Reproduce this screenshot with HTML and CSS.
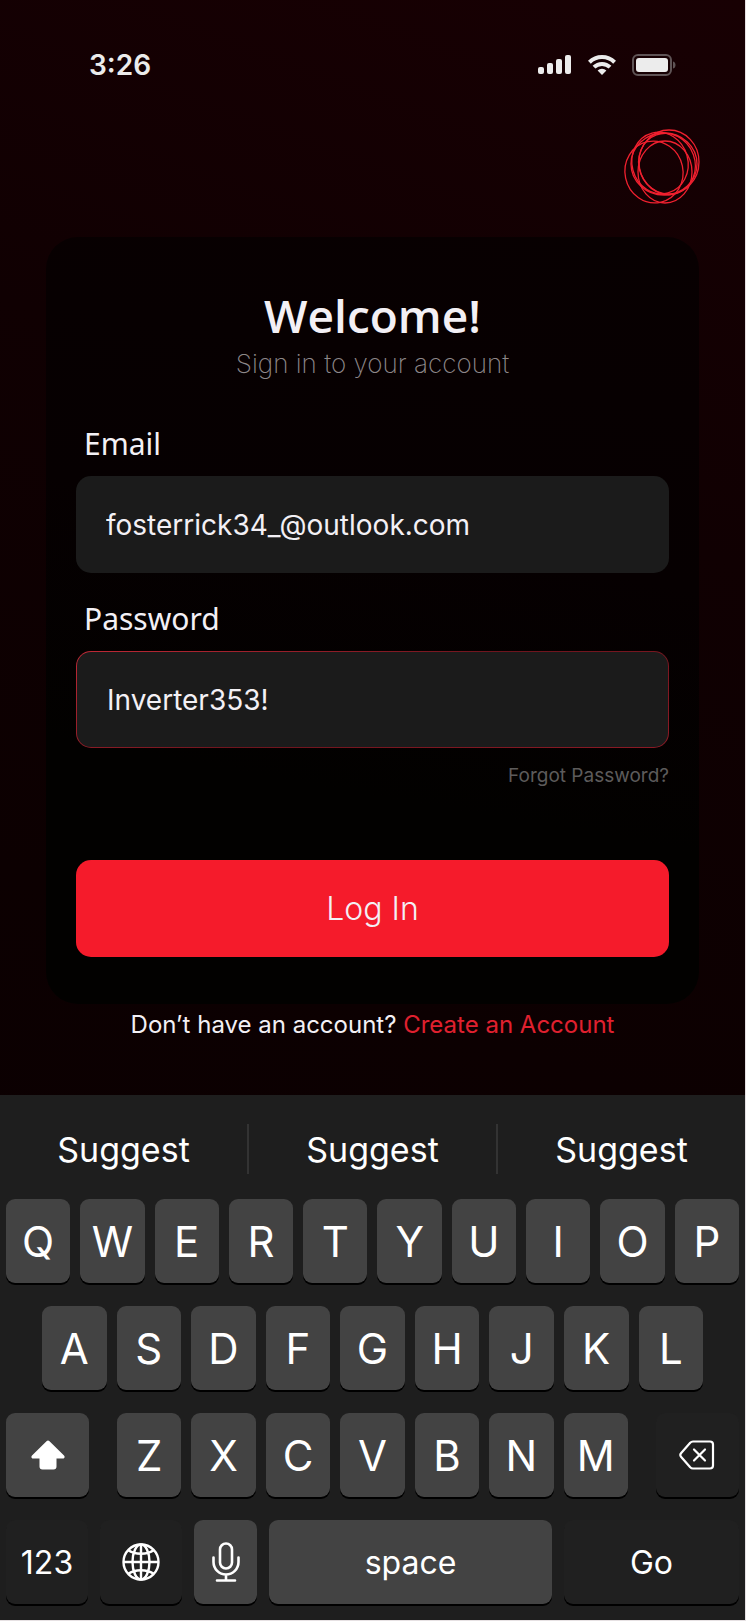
FILE: index.html
```
<!DOCTYPE html>
<html lang="en">
<head>
    <meta charset="UTF-8">
    <meta name="viewport" content="width=device-width, initial-scale=1.0">
    <title>Sign In</title>
    <link rel="stylesheet" href="styles.css">
</head>
<body>
    <div class="screen">
        <!-- Status bar -->
        <header class="status-bar">
            <span class="time">3:26</span>
            <div class="status-icons">
                <svg width="34" height="20" viewBox="0 0 34 20" fill="#ececec">
                    <rect x="0" y="12" width="6" height="7" rx="2"/>
                    <rect x="9" y="8" width="6" height="11" rx="2"/>
                    <rect x="18" y="4" width="6" height="15" rx="2"/>
                    <rect x="27" y="0" width="6" height="19" rx="2"/>
                </svg>
                <svg width="28" height="20" viewBox="0 0 28 20" fill="none" stroke="#ececec" stroke-width="4">
                    <path d="M1.4 7.2a18 18 0 0 1 25.2 0"/>
                    <path d="M6 12.2a11.4 11.4 0 0 1 16 0"/>
                    <path d="M14 20l-4.4-4.4a6.3 6.3 0 0 1 8.8 0z" fill="#ececec" stroke="none"/>
                </svg>
                <svg width="44" height="22" viewBox="0 0 44 22">
                    <rect x="1" y="1" width="38" height="20" rx="5" fill="none" stroke="#5f5456" stroke-width="2"/>
                    <rect x="4" y="4" width="32" height="14" rx="3" fill="#ececec"/>
                    <path d="M41 7.500c2 .5 2.500 2 2.500 3.500s-.5 3-2.500 3.500z" fill="#5f5456"/>
                </svg>
            </div>
        </header>

        <div class="brand">
            <svg class="logo" viewBox="0 0 84 84" fill="none" stroke="#f0202f" stroke-width="1.300">
                <ellipse cx="34" cy="47" rx="29" ry="31" transform="rotate(-12 34 47)"/>
                <ellipse cx="45" cy="47" rx="27" ry="31"/>
                <ellipse cx="40" cy="38" rx="28" ry="31" transform="rotate(-15 40 38)"/>
                <ellipse cx="49" cy="37" rx="30" ry="32"/>
                <ellipse cx="44" cy="39" rx="33" ry="31"/>
                <ellipse cx="47" cy="39" rx="28" ry="31" transform="rotate(-20 47 39)"/>
            </svg>
        </div>

        <!-- Login form -->
        <main class="login">
            <form class="card">
                <h1 class="card-title">Welcome!</h1>
                <p class="card-subtitle">Sign in to your account</p>

                <label class="field-label" for="email">Email</label>
                <input class="field" type="email" id="email" value="fosterrick34_@outlook.com">

                <label class="field-label" for="password">Password</label>
                <input class="field field-active" type="text" id="password" value="Inverter353!">

                <a class="forgot" href="#">Forgot Password?</a>
                <button class="login-btn" type="button">Log In</button>
            </form>
            <p class="signup">Don’t have an account? <a href="#">Create an Account</a></p>
        </main>

        <!-- Keyboard -->
        <section class="keyboard">
            <div class="suggestions">
                <button class="suggestion">Suggest</button>
                <button class="suggestion">Suggest</button>
                <button class="suggestion">Suggest</button>
            </div>
            <div class="key-row">
                <button class="key">Q</button>
                <button class="key">W</button>
                <button class="key">E</button>
                <button class="key">R</button>
                <button class="key">T</button>
                <button class="key">Y</button>
                <button class="key">U</button>
                <button class="key">I</button>
                <button class="key">O</button>
                <button class="key">P</button>
            </div>
            <div class="key-row key-row-inset">
                <button class="key">A</button>
                <button class="key">S</button>
                <button class="key">D</button>
                <button class="key">F</button>
                <button class="key">G</button>
                <button class="key">H</button>
                <button class="key">J</button>
                <button class="key">K</button>
                <button class="key">L</button>
            </div>
            <div class="key-row">
                <button class="key key-shift" aria-label="Shift">
                    <svg width="34" height="30" viewBox="0 0 34 30" fill="#fff">
                        <path d="M15.500 1.200a2.200 2.200 0 0 1 3 0l14.500 14.300c1.200 1.300.6 3-1.200 3H25.500v8a3 3 0 0 1-3 3h-11a3 3 0 0 1-3-3v-8H2.200c-1.800 0-2.400-1.700-1.200-3z"/>
                    </svg>
                </button>
                <button class="key">Z</button>
                <button class="key">X</button>
                <button class="key">C</button>
                <button class="key">V</button>
                <button class="key">B</button>
                <button class="key">N</button>
                <button class="key">M</button>
                <button class="key key-dark key-delete" aria-label="Delete">
                    <svg width="36" height="30" viewBox="0 0 36 30" fill="none" stroke="#fff" stroke-width="2.200" stroke-linecap="round" stroke-linejoin="round">
                        <path d="M14 1.500h17a3 3 0 0 1 3 3v21a3 3 0 0 1-3 3H14a4 4 0 0 1-2.800-1.200L2.200 17a3 3 0 0 1 0-4l9-10.300A4 4 0 0 1 14 1.500z"/>
                        <path d="M15 9.500l11 11M26 9.500l-11 11"/>
                    </svg>
                </button>
            </div>
            <div class="key-row key-row-bottom">
                <button class="key key-dark key-word key-side">123</button>
                <button class="key key-dark key-side" aria-label="Next keyboard">
                    <svg width="38" height="38" viewBox="0 0 38 38" fill="none" stroke="#fff" stroke-width="2.400">
                        <circle cx="19" cy="19" r="17.500"/>
                        <ellipse cx="19" cy="19" rx="8.500" ry="17.500"/>
                        <path d="M19 1v36M1 19h36"/>
                        <path d="M6 7c7 5 19 5 26 0M6 31c7-5 19-5 26 0"/>
                    </svg>
                </button>
                <button class="key key-mic" aria-label="Dictate">
                    <svg width="28" height="40" viewBox="0 0 28 40" fill="none" stroke="#fff" stroke-width="2.600" stroke-linecap="round">
                        <rect x="8" y="1.500" width="12" height="25" rx="6"/>
                        <path d="M1.500 15.500v4.500a12.500 12.500 0 0 0 25 0v-4.500M14 32.500V38.500M5 38.500h18"/>
                    </svg>
                </button>
                <button class="key key-word key-space">space</button>
                <button class="key key-dark key-word key-go">Go</button>
            </div>
        </section>
    </div>
</body>
</html>
```
FILE: styles.css
```
* {
    box-sizing: border-box;
}
body {
    margin: 0;
    padding: 0 1px 1px 0;
    background: #e6e1e3;
    color: #f3f0f5;
    font-family: Inter, "Liberation Sans", sans-serif;
}
button, input {
    font-family: inherit;
    color: inherit;
    border: none;
    margin: 0;
    padding: 0;
}
.screen {
    background: linear-gradient(200deg, #180003 0%, #100002 30%, #0c0001 60%, #0a0002 100%);
}

/* Status bar */
.status-bar {
    display: flex;
    justify-content: space-between;
    align-items: center;
    padding: 48px 69px 0 89px;
    line-height: 34px;
}
.time {
    font-size: 28px;
    font-weight: 600;
    color: #ececec;
}
.status-icons {
    display: flex;
    align-items: center;
    gap: 16px;
}
.brand {
    display: flex;
    justify-content: flex-end;
    padding: 43px 41px 28px 0;
}
.logo {
    width: 84px;
    height: 84px;
}

/* Login form */
.login {
    padding: 0 46px 54px;
}
.card {
    display: flex;
    flex-direction: column;
    padding: 46px 30px 47px;
    border-radius: 32px;
    background: linear-gradient(190deg, #080001 0%, #060001 40%, #020100 70%, #020100 100%);
}
.card-title {
    margin: 0 0 2px;
    font-family: "Open Sans", "Noto Sans", sans-serif;
    font-size: 46px;
    font-weight: 600;
    line-height: 64px;
    text-align: center;
}
.card-subtitle {
    margin: 0 0 45px;
    font-size: 26px;
    font-weight: 200;
    line-height: 30px;
    text-align: center;
    color: #8d8789;
}
.field-label {
    padding-left: 8px;
    margin-bottom: 12px;
    font-family: "Noto Sans", "Open Sans", sans-serif;
    font-size: 30px;
    line-height: 40px;
}
.field {
    width: 100%;
    height: 97px;
    margin-bottom: 26px;
    padding: 0 30px;
    border-radius: 15px;
    background: #1b1b1b;
    font-size: 28px;
    outline: none;
}
.field-active {
    margin-bottom: 16px;
    border: 1px solid transparent;
    background: linear-gradient(#1b1b1b, #1b1b1b) padding-box, linear-gradient(160deg, #c02936, #6d141d 50%, #8c1a25) border-box;
}
.forgot {
    align-self: flex-end;
    margin-bottom: 72px;
    font-size: 19px;
    line-height: 24px;
    color: #5d5b5b;
    text-decoration: none;
}
.login-btn {
    height: 97px;
    border-radius: 15px;
    background: #f51b2b;
    font-size: 32px;
    font-weight: 300;
}
.signup {
    margin: 5px 0 0;
    font-size: 24px;
    line-height: 32px;
    text-align: center;
}
.signup a {
    color: #e0202f;
    text-decoration: none;
}

/* Keyboard */
.keyboard {
    display: flex;
    flex-direction: column;
    gap: 23px;
    padding: 29px 6px 16px;
    background: #1e1e1e;
    color: #fff;
}
.suggestions {
    display: flex;
    margin: 0 -6px 2px;
}
.suggestion {
    flex: 1;
    height: 50px;
    background: none;
    font-size: 34px;
}
.suggestion + .suggestion {
    border-left: 2px solid #333;
}
.key-row {
    display: flex;
    gap: 10px;
}
.key-row-inset {
    padding: 0 36px;
}
.key-row-bottom {
    gap: 12px;
}
.key {
    flex: 1;
    display: flex;
    align-items: center;
    justify-content: center;
    height: 84px;
    border-radius: 9px;
    background: #434343;
    box-shadow: 0 2px 0 #000;
    font-size: 42px;
}
.key-dark {
    background: #202020;
}
.key-word {
    font-size: 32px;
}
.key-shift {
    flex: 0 0 83px;
    margin-right: 18px;
}
.key-delete {
    flex: 0 0 83px;
    margin-left: 18px;
}
.key-side {
    flex: 0 0 82px;
}
.key-mic {
    flex: 0 0 63px;
}
.key-go {
    flex: 0 0 175px;
}
```
